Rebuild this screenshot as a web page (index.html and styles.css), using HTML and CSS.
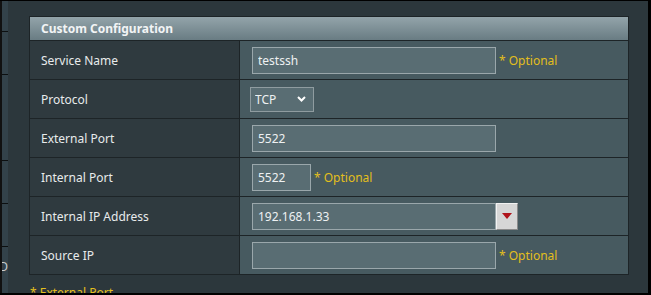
FILE: index.html
```html
<!DOCTYPE html>
<html lang="en">
<head>
    <meta charset="UTF-8">
    <meta name="viewport" content="width=device-width, initial-scale=1.0">
    <title>Port Forwarding</title>
    <link rel="stylesheet" href="styles.css">
</head>
<body>
    <div class="frame">
        <div class="side_menu">
            <div class="menu_item first"></div>
            <div class="menu_item"></div>
            <div class="menu_item tall"></div>
            <div class="menu_item"></div>
            <div class="menu_item"></div>
            <div class="menu_item last">D</div>
        </div>

        <div class="content">
            <div class="config_table">
                <div class="table_head">Custom Configuration</div>

                <div class="row">
                    <div class="label">Service Name</div>
                    <div class="value">
                        <input class="text_input" type="text" value="testssh">
                        <span class="hint">* Optional</span>
                    </div>
                </div>

                <div class="row">
                    <div class="label">Protocol</div>
                    <div class="value tight">
                        <select class="proto_select">
                            <option>TCP</option>
                            <option>UDP</option>
                            <option>BOTH</option>
                        </select>
                    </div>
                </div>

                <div class="row">
                    <div class="label">External Port</div>
                    <div class="value">
                        <input class="text_input" type="text" value="5522">
                    </div>
                </div>

                <div class="row">
                    <div class="label">Internal Port</div>
                    <div class="value">
                        <input class="text_input short" type="text" value="5522">
                        <span class="hint">* Optional</span>
                    </div>
                </div>

                <div class="row">
                    <div class="label">Internal IP Address</div>
                    <div class="value">
                        <input class="text_input" type="text" value="192.168.1.33">
                        <button class="drop_btn" type="button">
                            <svg width="10" height="6" viewBox="0 0 10 6"><polygon points="0,0 10,0 5,6" fill="#b0131b"/></svg>
                        </button>
                    </div>
                </div>

                <div class="row">
                    <div class="label">Source IP</div>
                    <div class="value">
                        <input class="text_input" type="text" value="">
                        <span class="hint">* Optional</span>
                    </div>
                </div>
            </div>

            <p class="note">* External Port</p>
        </div>
    </div>
</body>
</html>
```

FILE: styles.css
```css
* {
    box-sizing: border-box;
}

body {
    margin: 0;
    background-color: #000;
    font-family: "Noto Sans", "Open Sans", sans-serif;
    font-size: 12px;
    color: #e8ebec;
}

.frame {
    display: flex;
    margin: 1px 3px 0 0;
    height: 292px;
    overflow: hidden;
    background-color: #2c373c;
    border-left: 2px solid #111;
}

/* left menu, mostly hidden */
.side_menu {
    width: 6px;
    flex-shrink: 0;
    background-color: #33424a;
    display: flex;
    flex-direction: column;
}

.menu_item {
    height: 43px;
    border-bottom: 1px solid #0c0f10;
}

.menu_item.first {
    height: 31px;
}

.menu_item.tall {
    height: 86px;
}

.menu_item.last {
    border-bottom: none;
    height: auto;
    padding-top: 11px;
    color: #c9cfd1;
    line-height: 18px;
    direction: rtl;
    overflow: hidden;
    white-space: nowrap;
}

.content {
    flex: 1;
    padding: 15px 19px 0 21px;
}

.config_table {
    width: 600px;
    border: 1px solid #1d2427;
}

.table_head {
    height: 23px;
    line-height: 23px;
    padding-left: 11px;
    font-weight: 700;
    color: #f2f4f5;
    background: linear-gradient(#93a4aa, #697c83);
}

.row {
    display: grid;
    grid-template-columns: 210px 1fr;
    height: 39px;
    border-top: 1px solid #1d2427;
}

.label {
    display: flex;
    align-items: center;
    padding-left: 11px;
    background-color: #2f3a3f;
    border-right: 1px solid #1d2427;
}

.value {
    display: flex;
    align-items: center;
    padding-left: 12px;
    background-color: #475a60;
}

.value.tight {
    padding-left: 10px;
}

.text_input {
    width: 244px;
    height: 27px;
    padding: 0 5px;
    font-family: inherit;
    font-size: 12px;
    color: #eef1f2;
    background-color: #596d73;
    border: 1px solid #9aa7ab;
    outline: none;
}

.text_input.short {
    width: 59px;
}

.hint {
    margin-left: 3px;
    color: #e3bf1c;
}

.proto_select {
    width: 64px;
    height: 25px;
    padding-left: 4px;
    font-family: inherit;
    font-size: 12px;
    color: #eef1f2;
    background: #596d73 url("data:image/svg+xml;utf8,<svg xmlns='http://www.w3.org/2000/svg' width='9' height='6' viewBox='0 0 9 6'><polyline points='1,1 4.5,4.5 8,1' fill='none' stroke='white' stroke-width='2'/></svg>") no-repeat right 7px center;
    border: 1px solid #8f9ca0;
    appearance: none;
    -webkit-appearance: none;
    border-radius: 0;
}

.drop_btn {
    width: 22px;
    height: 27px;
    padding: 0;
    display: flex;
    align-items: center;
    justify-content: center;
    background-color: #d6d6d6;
    border: 1px solid;
    border-color: #f2f2f2 #8a8a8a #8a8a8a #f2f2f2;
    cursor: pointer;
}

.note {
    margin: 9px 0 0 1px;
    color: #e3bf1c;
}
```
